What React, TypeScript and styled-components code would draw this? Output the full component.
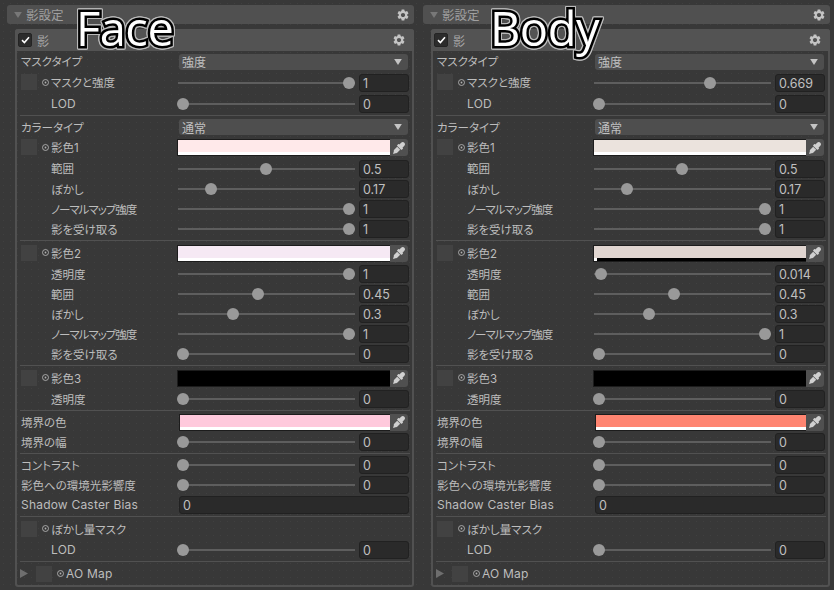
import React from 'react';
import styled, { createGlobalStyle } from 'styled-components';
import { MdSettings } from 'react-icons/md';
import { FaEyeDropper } from 'react-icons/fa';

const GlobalStyle = createGlobalStyle`
  html, body {
    margin: 0;
    background: #383838;
  }
  body {
    font-family: Inter, "Noto Sans CJK JP", sans-serif;
    font-size: 12px;
    font-feature-settings: "palt";
    color: #bdbdbd;
    overflow: hidden;
  }
`;

const Page = styled.div`
  display: flex;
  gap: 9px;
  width: 834px;
  height: 590px;
  padding: 5px 0 0 7px;
  box-sizing: border-box;
  background-color: #383838;
  background-image: radial-gradient(circle, #404040 0.6px, transparent 0.9px);
  background-size: 7px 7px;
`;

const Column = styled.div`
  position: relative;
  display: flex;
  flex-direction: column;
  width: 407px;
`;

const SectionBar = styled.div`
  display: flex;
  align-items: center;
  height: 19px;
  padding: 0 4px 0 7px;
  border-radius: 3px;
  background: #505050;
  color: #a0a0a0;
  font-size: 12.5px;
`;

const BarTitle = styled.span`
  flex: 1;
  margin-left: 4px;
`;

const GearButton = styled(MdSettings)`
  width: 14px;
  height: 14px;
  color: #c4c4c4;
`;

const DownArrow = styled.svg`
  width: 8px;
  height: 6px;
  fill: ${(p) => p.color || '#c4c4c4'};
  flex: none;
`;

const Panel = styled.div`
  display: flex;
  flex-direction: column;
  margin: 5px 0 0 8px;
  height: 558px;
  border: 2px solid #515151;
  border-top: 0;
  border-radius: 3px;
  box-sizing: border-box;
`;

const PanelHeader = styled.div`
  display: flex;
  align-items: center;
  height: 22px;
  flex: none;
  margin: 0 -2px;
  padding: 0 8px 0 3px;
  border-radius: 3px 3px 0 0;
  background: #535353;
`;

const Checkbox = styled.span`
  display: flex;
  align-items: center;
  justify-content: center;
  width: 12px;
  height: 12px;
  border-radius: 2px;
  border: 1px solid #242424;
  background: #2c2c2c;
  color: #fff;
`;

const HeaderTitle = styled.span`
  flex: 1;
  margin-left: 5px;
  color: #a8a8a8;
`;

const Row = styled.div<{ $h: number }>`
  display: grid;
  grid-template-columns: 156px 232px;
  align-items: center;
  height: ${(p) => p.$h}px;
  padding-left: 4px;
  flex: none;
`;

const Label = styled.div<{ $indent?: number; $latin?: boolean; $tight?: boolean }>`
  display: flex;
  align-items: center;
  padding-left: ${(p) => p.$indent || 0}px;
  padding-bottom: 1px;
  font-size: ${(p) => (p.$latin ? '12px' : '11.5px')};
  letter-spacing: ${(p) => (p.$latin ? '0.2px' : p.$tight ? '-1px' : '0')};
  white-space: nowrap;
`;

const TextureSlot = styled.span`
  width: 16px;
  height: 16px;
  margin-right: 5px;
  background: #424242;
  flex: none;
`;

const PropDot = styled.svg`
  width: 7px;
  height: 7px;
  margin-right: 2px;
  flex: none;
`;

const Foldout = styled.svg`
  width: 8px;
  height: 9px;
  margin-right: 8px;
  margin-left: -1px;
  fill: #6e6e6e;
  flex: none;
`;

const Divider = styled.div`
  flex: none;
  height: 1px;
  margin: 1px 2px 1px 3px;
  background: #515151;
`;

const SelectBox = styled.div`
  display: flex;
  align-items: center;
  justify-content: space-between;
  height: 16px;
  margin: 0 1px 0 2px;
  padding: 0 6px 0 3px;
  border-radius: 3px;
  background: #4e4e4e;
  color: #c0c0c0;
`;

const SliderWrap = styled.div`
  display: grid;
  grid-template-columns: 178px 50px;
  gap: 4px;
  align-items: center;
`;

const Track = styled.div`
  position: relative;
  height: 2px;
  margin-left: 1px;
  background: #5e5e5e;
`;

const Thumb = styled.span`
  position: absolute;
  top: -5px;
  width: 12px;
  height: 12px;
  margin-left: -1px;
  border-radius: 50%;
  background: #999;
`;

const NumberBox = styled.div<{ $wide?: boolean }>`
  display: flex;
  align-items: center;
  height: 18px;
  margin-left: ${(p) => (p.$wide ? '2px' : '0')};
  padding: 1px 0 0 3px;
  border-radius: 3px;
  border: 1px solid #212121;
  box-sizing: border-box;
  background: #2a2a2a;
  color: #c0c0c0;
  font-size: 12.5px;
`;

const ColorField = styled.div<{ $inset?: boolean }>`
  display: flex;
  height: 17px;
  margin: 0 1px 0 ${(p) => (p.$inset ? '2px' : '0')};
`;

const Swatch = styled.div`
  position: relative;
  flex: 1;
  border: 1px solid #1c1c1c;
  border-right: 0;
  background: #000;
`;

const SwatchAlpha = styled.span`
  position: absolute;
  left: 0;
  bottom: 0;
  height: 3px;
  background: #fff;
`;

const SwatchColor = styled.span`
  position: absolute;
  inset: 0 0 3px 0;
`;

const PickerButton = styled.div`
  display: flex;
  align-items: center;
  justify-content: center;
  width: 18px;
  border-radius: 0 3px 3px 0;
  background: #505050;
  color: #d0d0d0;
`;

const Overlay = styled.div<{ $x: number }>`
  position: absolute;
  left: ${(p) => p.$x}px;
  top: -3px;
  font-family: "Open Sans", sans-serif;
  font-size: 47px;
  line-height: 52px;
  letter-spacing: -0.5px;
  color: #fff;
  -webkit-text-stroke: 5px #000;
  paint-order: stroke fill;
  filter: drop-shadow(1px 0 0 #bbb) drop-shadow(-1px 0 0 #bbb) drop-shadow(0 1px 0 #bbb) drop-shadow(0 -1px 0 #bbb);
`;

const Triangle = ({ color }: { color?: string }) => (
  <DownArrow viewBox="0 0 9 7" color={color}>
    <polygon points="0,0 9,0 4.5,7" />
  </DownArrow>
);

const Dot = () => (
  <PropDot viewBox="0 0 7 7">
    <circle cx="3.5" cy="3.5" r="3" fill="none" stroke="#b0b0b0" strokeWidth="0.9" />
    <circle cx="3.5" cy="3.5" r="0.9" fill="#b0b0b0" />
  </PropDot>
);

const SliderControl = ({ value }: { value: number }) => (
  <SliderWrap>
    <Track>
      <Thumb style={{ left: `${value * 166}px` }} />
    </Track>
    <NumberBox>{value}</NumberBox>
  </SliderWrap>
);

const ColorControl = ({ color, alpha, inset }: { color: string; alpha: number; inset?: boolean }) => (
  <ColorField $inset={inset}>
    <Swatch>
      <SwatchColor style={{ background: color }} />
      <SwatchAlpha style={{ width: `${alpha * 100}%` }} />
    </Swatch>
    <PickerButton>
      <FaEyeDropper size={12} />
    </PickerButton>
  </ColorField>
);

const Slot = ({ children }: { children: React.ReactNode }) => (
  <Label>
    <TextureSlot />
    <Dot />
    {children}
  </Label>
);

interface Values {
  maskStrength: number;
  color1: string;
  color2: string;
  alpha2: number;
  borderColor: string;
}

const faceValues: Values = {
  maskStrength: 1,
  color1: '#ffe9ea',
  color2: '#f6e9f4',
  alpha2: 1,
  borderColor: '#ffc9dc',
};

const bodyValues: Values = {
  maskStrength: 0.669,
  color1: '#ebe3dd',
  color2: '#e0d5d0',
  alpha2: 0.014,
  borderColor: '#ff8571',
};

const ShadowPanel = ({ v, name, nameX }: { v: Values; name: string; nameX: number }) => (
  <Column>
    <SectionBar>
      <Triangle color="#787878" />
      <BarTitle>影設定</BarTitle>
      <GearButton />
    </SectionBar>
    <Panel>
      <PanelHeader>
        <Checkbox>
          <svg width="9" height="8" viewBox="0 0 9 8">
            <path d="M1 4.2 3.4 6.5 8 1.2" fill="none" stroke="#fff" strokeWidth="1.6" />
          </svg>
        </Checkbox>
        <HeaderTitle>影</HeaderTitle>
        <GearButton />
      </PanelHeader>

      <Row $h={21}>
        <Label>マスクタイプ</Label>
        <SelectBox>強度<Triangle /></SelectBox>
      </Row>
      <Row $h={21}>
        <Slot>マスクと強度</Slot>
        <SliderControl value={v.maskStrength} />
      </Row>
      <Row $h={21}>
        <Label $indent={30} $latin>LOD</Label>
        <SliderControl value={0} />
      </Row>
      <Divider />

      <Row $h={20}>
        <Label>カラータイプ</Label>
        <SelectBox>通常<Triangle /></SelectBox>
      </Row>
      <Row $h={21}>
        <Slot>影色1</Slot>
        <ColorControl color={v.color1} alpha={1} />
      </Row>
      <Row $h={21}>
        <Label $indent={30}>範囲</Label>
        <SliderControl value={0.5} />
      </Row>
      <Row $h={20}>
        <Label $indent={30}>ぼかし</Label>
        <SliderControl value={0.17} />
      </Row>
      <Row $h={20}>
        <Label $indent={30} $tight>ノーマルマップ強度</Label>
        <SliderControl value={1} />
      </Row>
      <Row $h={20}>
        <Label $indent={30}>影を受け取る</Label>
        <SliderControl value={1} />
      </Row>
      <Divider />

      <Row $h={22}>
        <Slot>影色2</Slot>
        <ColorControl color={v.color2} alpha={v.alpha2} />
      </Row>
      <Row $h={20}>
        <Label $indent={30}>透明度</Label>
        <SliderControl value={v.alpha2} />
      </Row>
      <Row $h={20}>
        <Label $indent={30}>範囲</Label>
        <SliderControl value={0.45} />
      </Row>
      <Row $h={20}>
        <Label $indent={30}>ぼかし</Label>
        <SliderControl value={0.3} />
      </Row>
      <Row $h={20}>
        <Label $indent={30} $tight>ノーマルマップ強度</Label>
        <SliderControl value={1} />
      </Row>
      <Row $h={20}>
        <Label $indent={30}>影を受け取る</Label>
        <SliderControl value={0} />
      </Row>
      <Divider />

      <Row $h={22}>
        <Slot>影色3</Slot>
        <ColorControl color="#000" alpha={0} />
      </Row>
      <Row $h={20}>
        <Label $indent={30}>透明度</Label>
        <SliderControl value={0} />
      </Row>
      <Divider />

      <Row $h={20}>
        <Label>境界の色</Label>
        <ColorControl color={v.borderColor} alpha={1} inset />
      </Row>
      <Row $h={20}>
        <Label>境界の幅</Label>
        <SliderControl value={0} />
      </Row>
      <Divider />

      <Row $h={20}>
        <Label>コントラスト</Label>
        <SliderControl value={0} />
      </Row>
      <Row $h={20}>
        <Label>影色への環境光影響度</Label>
        <SliderControl value={0} />
      </Row>
      <Row $h={20}>
        <Label $latin>Shadow Caster Bias</Label>
        <NumberBox $wide>0</NumberBox>
      </Row>
      <Divider />

      <Row $h={22}>
        <Slot>ぼかし量マスク</Slot>
        <div />
      </Row>
      <Row $h={20}>
        <Label $indent={30} $latin>LOD</Label>
        <SliderControl value={0} />
      </Row>
      <Divider />

      <Row $h={22}>
        <Label $latin>
          <Foldout viewBox="0 0 8 9">
            <polygon points="0,0 8,4.5 0,9" />
          </Foldout>
          <TextureSlot />
          <Dot />
          AO Map
        </Label>
        <div />
      </Row>
    </Panel>
    <Overlay $x={nameX}>{name}</Overlay>
  </Column>
);

export default function App() {
  return (
    <Page>
      <GlobalStyle />
      <ShadowPanel v={faceValues} name="Face" nameX={69} />
      <ShadowPanel v={bodyValues} name="Body" nameX={67} />
    </Page>
  );
}
